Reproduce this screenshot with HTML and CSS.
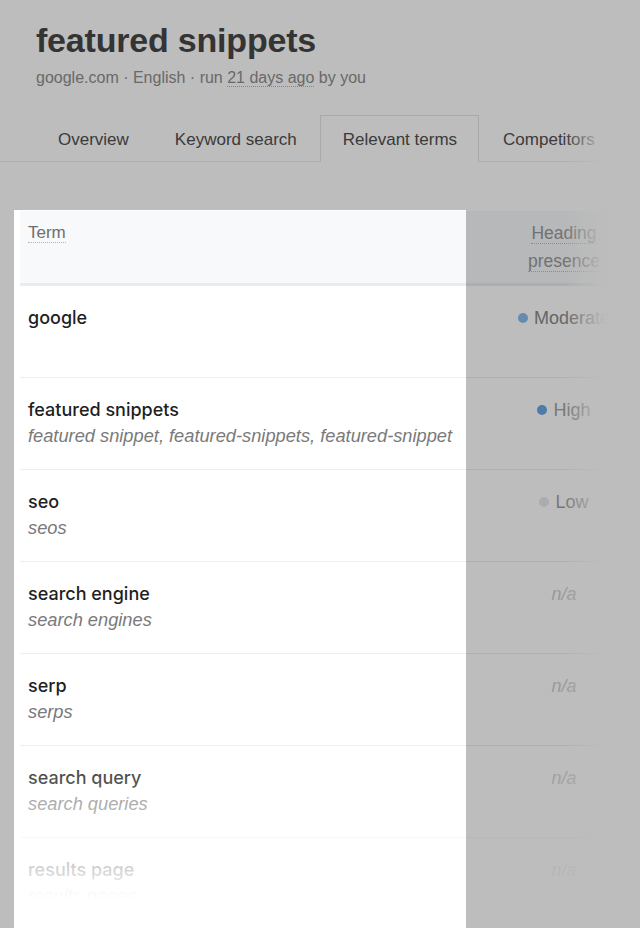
FILE: index.html
```html
<!DOCTYPE html>
<html lang="en">
<head>
<meta charset="utf-8">
<title>featured snippets – Relevant terms</title>
<link rel="stylesheet" href="styles.css">
</head>
<body>
<div class="page">
  <header class="head">
    <h1 class="title">featured snippets</h1>
    <p class="meta">google.com · English · run <span class="dotted">21 days ago</span> by you</p>
  </header>

  <nav class="tabs">
    <a class="tab">Overview</a>
    <a class="tab">Keyword search</a>
    <a class="tab active">Relevant terms</a>
    <a class="tab">Competitors</a>
  </nav>

  <section class="table">
    <div class="thead">
      <div class="cell-term"><span class="dotted">Term</span></div>
      <div class="cell-head"><span class="dotted">Heading</span><br><span class="dotted">presence</span></div>
    </div>

    <div class="row">
      <div class="cell-term"><div class="term">google</div></div>
      <div class="cell-val"><span class="dot moderate"></span><span class="val-mod">Moderate</span></div>
    </div>
    <div class="row">
      <div class="cell-term"><div class="term">featured snippets</div><div class="variants">featured snippet, featured-snippets, featured-snippet</div></div>
      <div class="cell-val"><span class="dot high"></span><span class="val">High</span></div>
    </div>
    <div class="row">
      <div class="cell-term"><div class="term">seo</div><div class="variants">seos</div></div>
      <div class="cell-val"><span class="dot low"></span><span class="val">Low</span></div>
    </div>
    <div class="row">
      <div class="cell-term"><div class="term">search engine</div><div class="variants">search engines</div></div>
      <div class="cell-val"><span class="na">n/a</span></div>
    </div>
    <div class="row">
      <div class="cell-term"><div class="term">serp</div><div class="variants">serps</div></div>
      <div class="cell-val"><span class="na">n/a</span></div>
    </div>
    <div class="row">
      <div class="cell-term"><div class="term">search query</div><div class="variants">search queries</div></div>
      <div class="cell-val"><span class="na">n/a</span></div>
    </div>
    <div class="row">
      <div class="cell-term"><div class="term">results page</div><div class="variants">results pages</div></div>
      <div class="cell-val"><span class="na">n/a</span></div>
    </div>
  </section>

  <div class="fade-right"></div>
  <div class="fade-bottom"></div>
  <div class="spotlight"></div>
</div>
</body>
</html>
```

FILE: styles.css
```css
* { box-sizing: border-box; }

html, body {
  margin: 0;
  background: #ffffff;
}

.page {
  position: relative;
  height: 928px;
  overflow: hidden;
  font-family: "Liberation Sans", Arial, Helvetica, sans-serif;
  color: #222222;
}

.head {
  padding: 17px 36px 0;
}

.title {
  margin: 0;
  font-size: 34px;
  line-height: 46px;
  font-weight: 700;
  color: #474747;
  letter-spacing: -0.2px;
}

.meta {
  margin: 4px 0 0;
  font-size: 16px;
  line-height: 22px;
  color: #8e8e8e;
}

.dotted {
  border-bottom: 1px dotted #b4b4b4;
}

.tabs {
  display: flex;
  gap: 1px;
  margin-top: 26px;
  padding-left: 35px;
  border-bottom: 1px solid #ececec;
}

.tab {
  display: block;
  padding: 13px 21px 10px 22px;
  font-size: 17px;
  line-height: 22px;
  color: #505050;
  border: 1px solid transparent;
  border-bottom: none;
  white-space: nowrap;
}

.tab.active {
  border-color: #e4e4e4;
  background: #ffffff;
  margin-bottom: -1px;
  padding-bottom: 11px;
}

.table {
  margin: 49px 0 0 20px;
  width: 588px;
}

.thead {
  display: grid;
  grid-template-columns: 1fr 88px;
  height: 75px;
  padding-top: 8px;
  background: #f7f9fa;
  border-bottom: 3px solid #e9edf0;
  font-size: 17px;
  line-height: 28px;
  color: #6e6e6e;
}

.thead .cell-term {
  padding-left: 8px;
}

.cell-head {
  text-align: center;
  white-space: nowrap;
  color: #9a9a9a;
  font-size: 17.5px;
}

.cell-head .dotted {
  border-bottom-color: #bdbdbd;
}

.row {
  display: grid;
  grid-template-columns: 1fr 88px;
  height: 92px;
  padding-top: 19px;
  border-bottom: 1px solid #eeeeee;
  font-size: 18px;
  line-height: 26px;
}

.row .cell-term {
  padding-left: 8px;
}

.term {
  font-family: "Inter", "Liberation Sans", Arial, sans-serif;
  font-weight: 500;
  font-size: 18px;
  color: #1f1f1f;
}

.variants {
  font-style: italic;
  font-size: 18.25px;
  color: #7a7a7a;
}

.cell-val {
  display: flex;
  justify-content: center;
  align-items: center;
  height: 26px;
  white-space: nowrap;
}

.dot {
  flex: none;
  width: 10px;
  height: 10px;
  border-radius: 50%;
  margin-right: 6px;
}

.dot.moderate { background: #8cbcec; }
.dot.high { background: #6aa6e2; }
.dot.low { background: #e6e9ec; }

.val-mod { color: #8a8a8a; }
.val { color: #a2a2a2; }

.na {
  font-style: italic;
  color: #cfcfcf;
}

.fade-right {
  position: absolute;
  top: 0;
  right: 0;
  width: 76px;
  height: 100%;
  background: linear-gradient(to right, rgba(255,255,255,0) 0, rgba(255,255,255,0.5) 20px, rgba(255,255,255,0.9) 36px, #ffffff 46px);
}

.fade-bottom {
  position: absolute;
  left: 0;
  right: 0;
  top: 744px;
  bottom: 0;
  background: linear-gradient(to bottom, rgba(255,255,255,0) 0, #ffffff 156px);
}

.spotlight {
  position: absolute;
  left: 14px;
  top: 210px;
  width: 452px;
  height: 740px;
  box-shadow: 0 0 0 1400px rgba(0, 0, 0, 0.26);
  pointer-events: none;
}
```
